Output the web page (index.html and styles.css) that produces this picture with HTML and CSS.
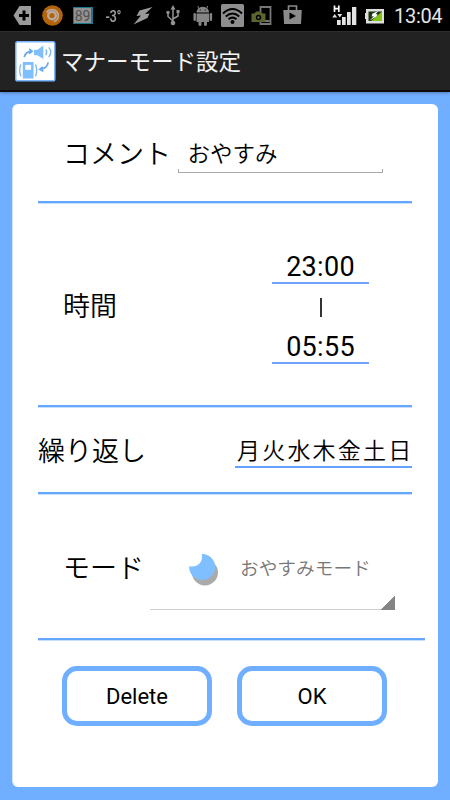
FILE: index.html
```html
<!DOCTYPE html>
<html lang="ja">
<head>
<meta charset="utf-8">
<title>マナーモード設定</title>
<link rel="stylesheet" href="styles.css">
</head>
<body>
<div class="status">
  <div class="notices">
    <svg class="cell" viewBox="0 0 30 31"><path d="M5.500 15.500L11.500 6H23v19H11.500z" fill="#9b9b9b"/><path d="M16 10.500v10M11 15.500h10" stroke="#000" stroke-width="3"/></svg>
    <svg class="cell" viewBox="0 0 30 31"><circle cx="14.500" cy="15.500" r="10.300" fill="#b46408"/><circle cx="14" cy="15.500" r="3.800" fill="none" stroke="#b8aaa0" stroke-width="2.400"/><path d="M8.500 12.500Q11 9.300 14.500 9.500a6 6 0 0 1 5.800 6q0 4.500-4.500 6.300" fill="none" stroke="#b8aaa0" stroke-width="1.600"/></svg>
    <span class="cell level"><span>89</span></span>
    <span class="cell temp"><span>-3°</span></span>
    <svg class="cell" viewBox="0 0 30 31"><path d="M24.500 7L11.500 10.500 8.500 16l4.500-.5L5.500 24.500l14-6.500 2-4.500-4.500.5z" fill="#999"/></svg>
    <svg class="cell" viewBox="0 0 30 31"><path d="M15 7v15M10 13v3.500l5 4.500M20 12v4l-5 3" fill="none" stroke="#929292" stroke-width="1.500"/><path d="M12.500 9.500L15 5l2.500 4.500z" fill="#929292"/><circle cx="15" cy="23" r="2.300" fill="#929292"/><circle cx="10" cy="12.500" r="1.700" fill="#929292"/><path d="M18.500 10h3v3h-3z" fill="#929292"/></svg>
    <svg class="cell" viewBox="0 0 30 31"><g fill="#858585"><path d="M8.500 12.500a6.300 5.700 0 0 1 12.600 0zM8.500 13.500h12.600v8.500H8.500z"/><rect x="5.500" y="13" width="2.400" height="8" rx="1.200"/><rect x="21.700" y="13" width="2.400" height="8" rx="1.200"/><rect x="10.500" y="21" width="3" height="5" rx="1.400"/><rect x="16" y="21" width="3" height="5" rx="1.400"/></g><path d="M11 9L9.800 6M18.500 9l1.200-3" stroke="#858585"/><path d="M11.700 9.500h1v1h-1zM16.800 9.500h1v1h-1z" fill="#000"/></svg>
    <svg class="cell" viewBox="0 0 30 31"><rect x="3" y="4" width="23" height="23" rx="1.500" fill="#8e8e8e"/><path d="M5 13.500Q14.500 4.500 24 13.500M7.800 16.500q6.700-6 13.400 0M10.500 19.300q4-3.400 8 0" fill="none" stroke="#000" stroke-width="2"/><circle cx="14.500" cy="22" r="2" fill="#000"/></svg>
    <svg class="cell" viewBox="0 0 30 31"><path d="M12.500 7h10v17h-10z" fill="none" stroke="#777" stroke-width="1.800"/><path d="M13.500 21h8" stroke="#777" stroke-width="2"/><path d="M3.500 13.500h3l1.500-2h5l1.500 2h3V22h-14z" fill="#5c652d"/><circle cx="10.500" cy="17.500" r="2.700" fill="#000"/><circle cx="10.500" cy="17.500" r="1.300" fill="#5c652d"/></svg>
    <svg class="cell" viewBox="0 0 30 31"><path d="M5.300 10h18.500l-.8 14H6.100z" fill="#8b8b8b"/><path d="M10.500 10V6h8v4" fill="none" stroke="#8b8b8b" stroke-width="1.600"/><path d="M11.500 12.500v7l6.500-3.500z" fill="#000"/></svg>
  </div>
  <div class="system">
    <svg class="signal" viewBox="0 0 26 31"><path d="M2.500 5.500V12M6.800 5.500V12M2.500 8.700h4.300" fill="none" stroke="#fff" stroke-width="1.700"/><path d="M.2 17.500h5L2.700 14zM5.300 14h5l-2.500 3.500z" fill="#ddd"/><path d="M5 20h3.700v5H5zM10 17h3.700v8H10zM15 12h3.700v13H15zM20 7h4.300v18H20z" fill="#e3e3e3"/></svg>
    <svg class="battery" viewBox="0 0 20 31"><path d="M0 13h2v6H0zM1 9h18v14.500H1z" fill="#dedede"/><path d="M3.500 11.500H17V21H3.500z" fill="#17330b"/><path d="M6 21l11-9.500V21z" fill="#82c313"/><path d="M13.500 11L7.500 13.500l-1 3 2.500-.3L4.500 20.500l7-4 1-2.500-2 .3z" fill="#fff"/></svg>
    <span class="clock">13:04</span>
  </div>
</div>
<header class="bar">
  <svg class="logo" viewBox="0 0 42 42"><rect x=".8" y=".8" width="40" height="40" rx="2" fill="#fff" stroke="#77b3ff" stroke-width="1.500"/><g fill="#7fbfff"><path d="M19.500 9h3.500l6-4.500v14L23 14.500h-3.500zM8 21.500h11v17H8z"/></g><path d="M10.500 24.500h6v5h-6z" fill="#fff"/><g fill="none" stroke="#7fb7f5" stroke-width="1.400"><path d="M31.500 8.500q2 3 0 6M34.500 6.500q4.500 5 0 10M6 24q-2.500 6 0 12M21 24q2.500 6 0 12"/></g><g fill="none" stroke="#6aa9ed" stroke-width="1.800"><path d="M9.500 16.500q1.500-6 8-6M14.500 8l3 2.500-3 2.500M34 22q-1 6-8 7M28.500 26.500L25.500 29l3.500 2"/></g></svg>
  <h1 class="title">マナーモード設定</h1>
</header>
<main class="page">
  <form class="card">
    <section class="row comment"><span class="label">コメント</span><span class="field">おやすみ</span></section>
    <section class="row time"><span class="label">時間</span>
      <div class="range"><span class="hour">23:00</span><span class="dash"></span><span class="hour">05:55</span></div>
    </section>
    <section class="row repeat"><span class="label">繰り返し</span><span class="days">月火水木金土日</span></section>
    <section class="row mode"><span class="label">モード</span>
      <div class="spinner">
        <svg class="moon" viewBox="0 0 34 36"><defs><filter id="soft"><feGaussianBlur stdDeviation=".7"/></filter></defs><path d="M13.800 2A13 13 0 1 1 1.200 14.200Q6 15.500 10.500 12 15 8 13.800 2z" transform="translate(2.800 5.500)" fill="#aaa" filter="url(#soft)"/><path d="M13.800 2A13 13 0 1 1 1.200 14.200Q7 15.500 11 12 15 8 13.800 2z" fill="#7fbfff"/></svg>
        <span class="choice">おやすみモード</span>
      </div>
    </section>
    <div class="actions"><button type="button">Delete</button><button type="button">OK</button></div>
  </form>
</main>
</body>
</html>
```
FILE: styles.css
```css
* { box-sizing: border-box; }
body {
  margin: 0;
  width: 450px;
  height: 800px;
  overflow: hidden;
  display: flex;
  flex-direction: column;
  background: #70aeff;
  color: #000;
  font-family: Roboto, "Noto Sans CJK JP", sans-serif;
}
.status {
  height: 31px;
  flex: none;
  background: #000;
  display: flex;
  justify-content: space-between;
  padding: 0 7px 0 8px;
}
.notices, .system { display: flex; }
.cell { width: 30px; height: 31px; flex: none; }
.level, .temp { display: flex; align-items: center; justify-content: center; }
.level span {
  width: 20px;
  height: 17px;
  border: 1px solid #19798c;
  border-right-width: 2px;
  background: #929292;
  color: #505050;
  font: 14px/16px Roboto, sans-serif;
  text-align: center;
}
.temp span {
  color: #a0a0a0;
  font: 500 17px/18px Roboto, sans-serif;
  letter-spacing: -0.5px;
  transform: scaleX(.76);
}
.system { align-items: center; color: #e4e4e4; }
.signal { width: 26px; height: 31px; margin-right: 7px; }
.battery { width: 20px; height: 31px; margin-right: 9px; }
.clock {
  width: 49px;
  padding-top: 2px;
  font: 20px/31px Roboto, sans-serif;
  letter-spacing: -0.3px;
  white-space: nowrap;
}
.bar {
  height: 61px;
  flex: none;
  background: #222;
  border-top: 1px solid #2e2e2e;
  border-bottom: 2px solid #10090b;
  display: flex;
  align-items: center;
  padding: 1px 0 0 15px;
  box-shadow: 0 1px 3px rgba(0, 0, 0, .3);
}
.logo { width: 41px; height: 41px; margin-right: 5px; }
.title { margin: 0; color: #f3f3f3; font-size: 22.5px; line-height: 30px; font-weight: 400; white-space: nowrap; }
.page { flex: 1; padding: 12px 12px 13px; display: flex; }
.card {
  flex: 1;
  background: #fff;
  border-left: 1px solid #d3e5ff;
  border-radius: 6px;
  padding: 0 13px 0 25px;
  display: flex;
  flex-direction: column;
}
.row {
  flex: none;
  display: flex;
  align-items: center;
  border-bottom: 2px solid #64a7ff;
  box-shadow: 0 1px 0 #c9dfff;
  margin-right: 13px;
}
.label { padding-top: 5px; font-size: 27px; line-height: 40px; font-weight: 350; white-space: nowrap; }
.comment { height: 99px; padding-left: 25px; }
.field {
  width: 205px;
  height: 39px;
  margin: 2px 0 0 7px;
  padding-left: 9.5px;
  font-size: 22.5px;
  line-height: 40px;
  font-weight: 350;
  background:
    linear-gradient(#aaa, #aaa) left bottom / 1px 4px no-repeat,
    linear-gradient(#aaa, #aaa) right bottom / 1px 4px no-repeat,
    linear-gradient(#aaa, #aaa) left bottom / 100% 1px no-repeat;
}
.time { height: 204px; padding: 0 43px 0 25px; justify-content: space-between; }
.range { width: 97px; display: flex; flex-direction: column; align-items: center; padding-top: 5px; }
.hour {
  width: 97px;
  height: 35px;
  border-bottom: 2px solid #70a3ff;
  text-align: center;
  font-size: 27px;
  line-height: 37px;
  letter-spacing: .3px;
}
.dash { width: 2px; height: 19px; margin: 14px 0 12px; background: #333; }
.repeat { height: 87px; justify-content: space-between; }
.days {
  width: 177px;
  height: 36px;
  padding-left: 2px;
  border-bottom: 2px solid #64a0ff;
  font-size: 23px;
  line-height: 39px;
  letter-spacing: 2.2px;
  font-weight: 350;
  white-space: nowrap;
}
.mode { height: 146px; margin-right: 0; padding: 0 30px 0 25px; justify-content: space-between; }
.spinner {
  width: 245px;
  height: 87px;
  display: flex;
  align-items: center;
  padding: 6px 0 0 38px;
  margin-bottom: -1px;
  background:
    linear-gradient(135deg, transparent 50%, #858585 50.5%) right bottom / 15px 15px no-repeat,
    linear-gradient(#d0d0d0, #d0d0d0) left bottom / 100% 1px no-repeat;
}
.moon { width: 34px; height: 36px; margin-right: 18px; }
.choice { margin-bottom: 7px; color: #777; font-size: 18.7px; font-weight: 350; white-space: nowrap; }
.actions { display: flex; gap: 25px; padding: 26px 0 0 24px; }
.actions button {
  width: 150px;
  height: 60px;
  padding: 0;
  border: 5px solid #70aeff;
  border-radius: 15px;
  background: #fff;
  color: #000;
  font: 22px Roboto, sans-serif;
}
```
